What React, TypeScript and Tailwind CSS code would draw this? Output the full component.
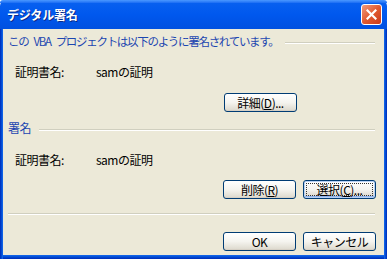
import React from "react";

const font = { fontFamily: '"Noto Sans CJK JP", "Noto Sans", sans-serif' };

function XPButton({ children, focused = false }: { children: React.ReactNode; focused?: boolean }) {
  return (
    <div
      className={
        "relative w-[73px] h-[19px] rounded-[3px] border border-[#003c74] flex items-center justify-center text-[12px] leading-none text-black tracking-[-0.5px] " +
        (focused
          ? "bg-gradient-to-b from-[#ffffff] via-[#f4f4f0] to-[#d6d0c5] shadow-[inset_0_0_0_1px_#b8d2f6,inset_0_-1px_0_1px_#8fb3ee]"
          : "bg-gradient-to-b from-[#ffffff] via-[#f5f4ef] to-[#dcd8cc] shadow-[inset_0_-1px_0_#d6d0c5]")
      }
    >
      {focused && <div className="absolute inset-[2px] border border-dotted border-[#333]" />}
      <span className="relative flex items-center">{children}</span>
    </div>
  );
}

function Sep({ className = "" }: { className?: string }) {
  return <div className={"h-[2px] border-t border-[#d0cfbf] border-b border-b-white " + className} />;
}

export default function App() {
  return (
    <div className="w-[387px] h-[259px] flex flex-col bg-white" style={font}>
      {/* Title bar */}
      <div className="h-[29px] flex items-center bg-gradient-to-b from-[#0a62f0] via-[#0058ee] to-[#0050e0] rounded-t-[6px] relative">
        <div className="absolute inset-x-0 top-0 h-[3px] bg-gradient-to-b from-[#4a98ff] to-[#1a6cf4] rounded-t-[6px]" />
        <span className="relative ml-[7px] text-white font-bold text-[12px] leading-none tracking-[-0.2px] [text-shadow:1px_1px_0_#0a2a8a]">
          デジタル署名
        </span>
        <div className="relative ml-auto mr-[5px] w-[21px] h-[21px] rounded-[3px] border border-white bg-gradient-to-br from-[#f09a7c] via-[#e15a30] to-[#c9381a] flex items-center justify-center">
          <svg width="11" height="11" viewBox="0 0 11 11">
            <path d="M1.5 1.5 L9.5 9.5 M9.5 1.5 L1.5 9.5" stroke="white" strokeWidth="2.2" strokeLinecap="square" />
          </svg>
        </div>
      </div>
      {/* Body with borders */}
      <div className="flex-1 flex bg-[#0831d9]">
        <div className="w-[3px] bg-gradient-to-r from-[#0029b8] to-[#166aee]" />
        <div className="flex-1 flex flex-col">
          <div className="flex-1 bg-[#ece9d8] flex flex-col text-[12px] leading-[14px] text-black">
            {/* Header 1 */}
            <div className="mt-[5px] h-[14px] flex items-center pl-[5px] pr-[9px]">
              <span className="text-[#1c46b0] whitespace-nowrap text-[11.5px] tracking-[-1.3px]">
                この<span className="inline-block w-[5px]" />VBA<span className="inline-block w-[5px]" />プロジェクトは以下のように署名されています。
              </span>
              <Sep className="flex-1 ml-[6px] mt-[4px]" />
            </div>
            {/* Row */}
            <div className="mt-[17px] h-[14px] flex items-center tracking-[-0.5px]">
              <span className="ml-[12px] w-[81px]">証明書名:</span>
              <span>samの証明</span>
            </div>
            <div className="mt-[14px] flex pl-[221px]">
              <XPButton>
                詳細(<u>D</u>)...
              </XPButton>
            </div>
            {/* Header 2 */}
            <div className="mt-[9px] h-[14px] flex items-center pl-[5px] pr-[9px]">
              <span className="text-[#1c46b0] whitespace-nowrap tracking-[-0.5px]">署名</span>
              <Sep className="flex-1 ml-[8px] mt-[4px]" />
            </div>
            <div className="mt-[18px] h-[14px] flex items-center tracking-[-0.5px]">
              <span className="ml-[12px] w-[81px]">証明書名:</span>
              <span>samの証明</span>
            </div>
            <div className="mt-[13px] flex pl-[220px] gap-[7px]">
              <XPButton>
                削除(<u>R</u>)
              </XPButton>
              <XPButton focused>
                選択(<u>C</u>)...
              </XPButton>
            </div>
            <Sep className="mt-[14px] ml-[5px] mr-[9px]" />
            <div className="mt-[17px] flex pl-[220px] gap-[7px]">
              <XPButton>OK</XPButton>
              <XPButton>キャンセル</XPButton>
            </div>
          </div>
          <div className="h-[4px] bg-gradient-to-b from-[#166aee] to-[#0029b8]" />
        </div>
        <div className="w-[3px] bg-gradient-to-r from-[#166aee] to-[#0029b8]" />
      </div>
    </div>
  );
}
